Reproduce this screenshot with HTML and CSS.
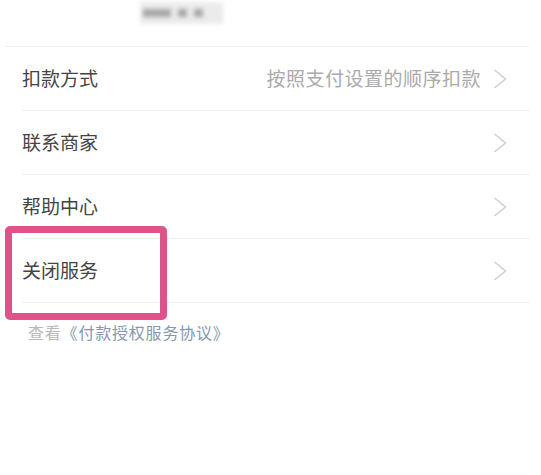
FILE: index.html
```html
<!DOCTYPE html>
<html lang="zh-CN">
<head>
<meta charset="utf-8">
<link rel="stylesheet" href="styles.css">
</head>
<body>
<div class="page">
  <div class="head">
    <div class="blur">
      <span class="b1"></span><span class="b2"></span><span class="b3"></span>
    </div>
  </div>
  <div class="list">
    <div class="row">
      <span class="label">扣款方式</span>
      <span class="right"><span class="value">按照支付设置的顺序扣款</span>
        <svg class="chev" width="14" height="20" viewBox="0 0 14 20"><polyline points="1.5,1 12.5,10 1.5,19" fill="none" stroke="#cccccc" stroke-width="1.4"/></svg>
      </span>
    </div>
    <div class="row">
      <span class="label">联系商家</span>
      <span class="right">
        <svg class="chev" width="14" height="20" viewBox="0 0 14 20"><polyline points="1.5,1 12.5,10 1.5,19" fill="none" stroke="#cccccc" stroke-width="1.4"/></svg>
      </span>
    </div>
    <div class="row">
      <span class="label">帮助中心</span>
      <span class="right">
        <svg class="chev" width="14" height="20" viewBox="0 0 14 20"><polyline points="1.5,1 12.5,10 1.5,19" fill="none" stroke="#cccccc" stroke-width="1.4"/></svg>
      </span>
    </div>
    <div class="row">
      <span class="label">关闭服务</span>
      <span class="right">
        <svg class="chev" width="14" height="20" viewBox="0 0 14 20"><polyline points="1.5,1 12.5,10 1.5,19" fill="none" stroke="#cccccc" stroke-width="1.4"/></svg>
      </span>
    </div>
  </div>
  <div class="foot"><span class="muted">查看</span><span class="link">《付款授权服务协议》</span></div>
  <div class="highlight"></div>
</div>
</body>
</html>
```
FILE: styles.css
```css
html, body {
  margin: 0;
  padding: 0;
  background: #ffffff;
}
.page {
  position: relative;
  width: 541px;
  height: 475px;
  font-family: "Noto Sans CJK SC", "Noto Sans", sans-serif;
  overflow: hidden;
}
.head {
  height: 46px;
  display: flex;
  padding-left: 140px;
}
.blur {
  width: 80px;
  height: 22px;
  margin-top: 2px;
  background: #ebebeb;
  display: flex;
  align-items: center;
  gap: 7px;
  padding-left: 3px;
  filter: blur(2px);
}
.blur span {
  height: 8px;
  background: #a8a8a8;
}
.b1 { width: 28px; }
.b2 { width: 9px; }
.b3 { width: 9px; }
.list {
  margin-left: 5px;
  width: 524px;
  border-top: 1px solid #f0f0f0;
}
.row {
  margin-left: 17px;
  height: 61px;
  padding-bottom: 2px;
  border-bottom: 1px solid #eeeeee;
  display: flex;
  align-items: center;
  justify-content: space-between;
  padding-right: 22px;
}
.label {
  font-size: 19px;
  color: #444444;
}
.right {
  display: flex;
  align-items: center;
  gap: 12px;
}
.value {
  font-size: 19px;
  color: #aaaaaa;
  letter-spacing: 0.5px;
}
.chev {
  display: block;
  margin-top: 2px;
}
.foot {
  padding-left: 28px;
  margin-top: 19px;
  font-size: 16px;
  line-height: 20px;
  letter-spacing: 0.8px;
}
.muted { color: #b8b8b8; }
.link { color: #8797ad; }
.highlight {
  position: absolute;
  left: 5px;
  top: 226px;
  width: 148px;
  height: 80px;
  border: 7px solid #e0538a;
  border-radius: 5px;
}
```
